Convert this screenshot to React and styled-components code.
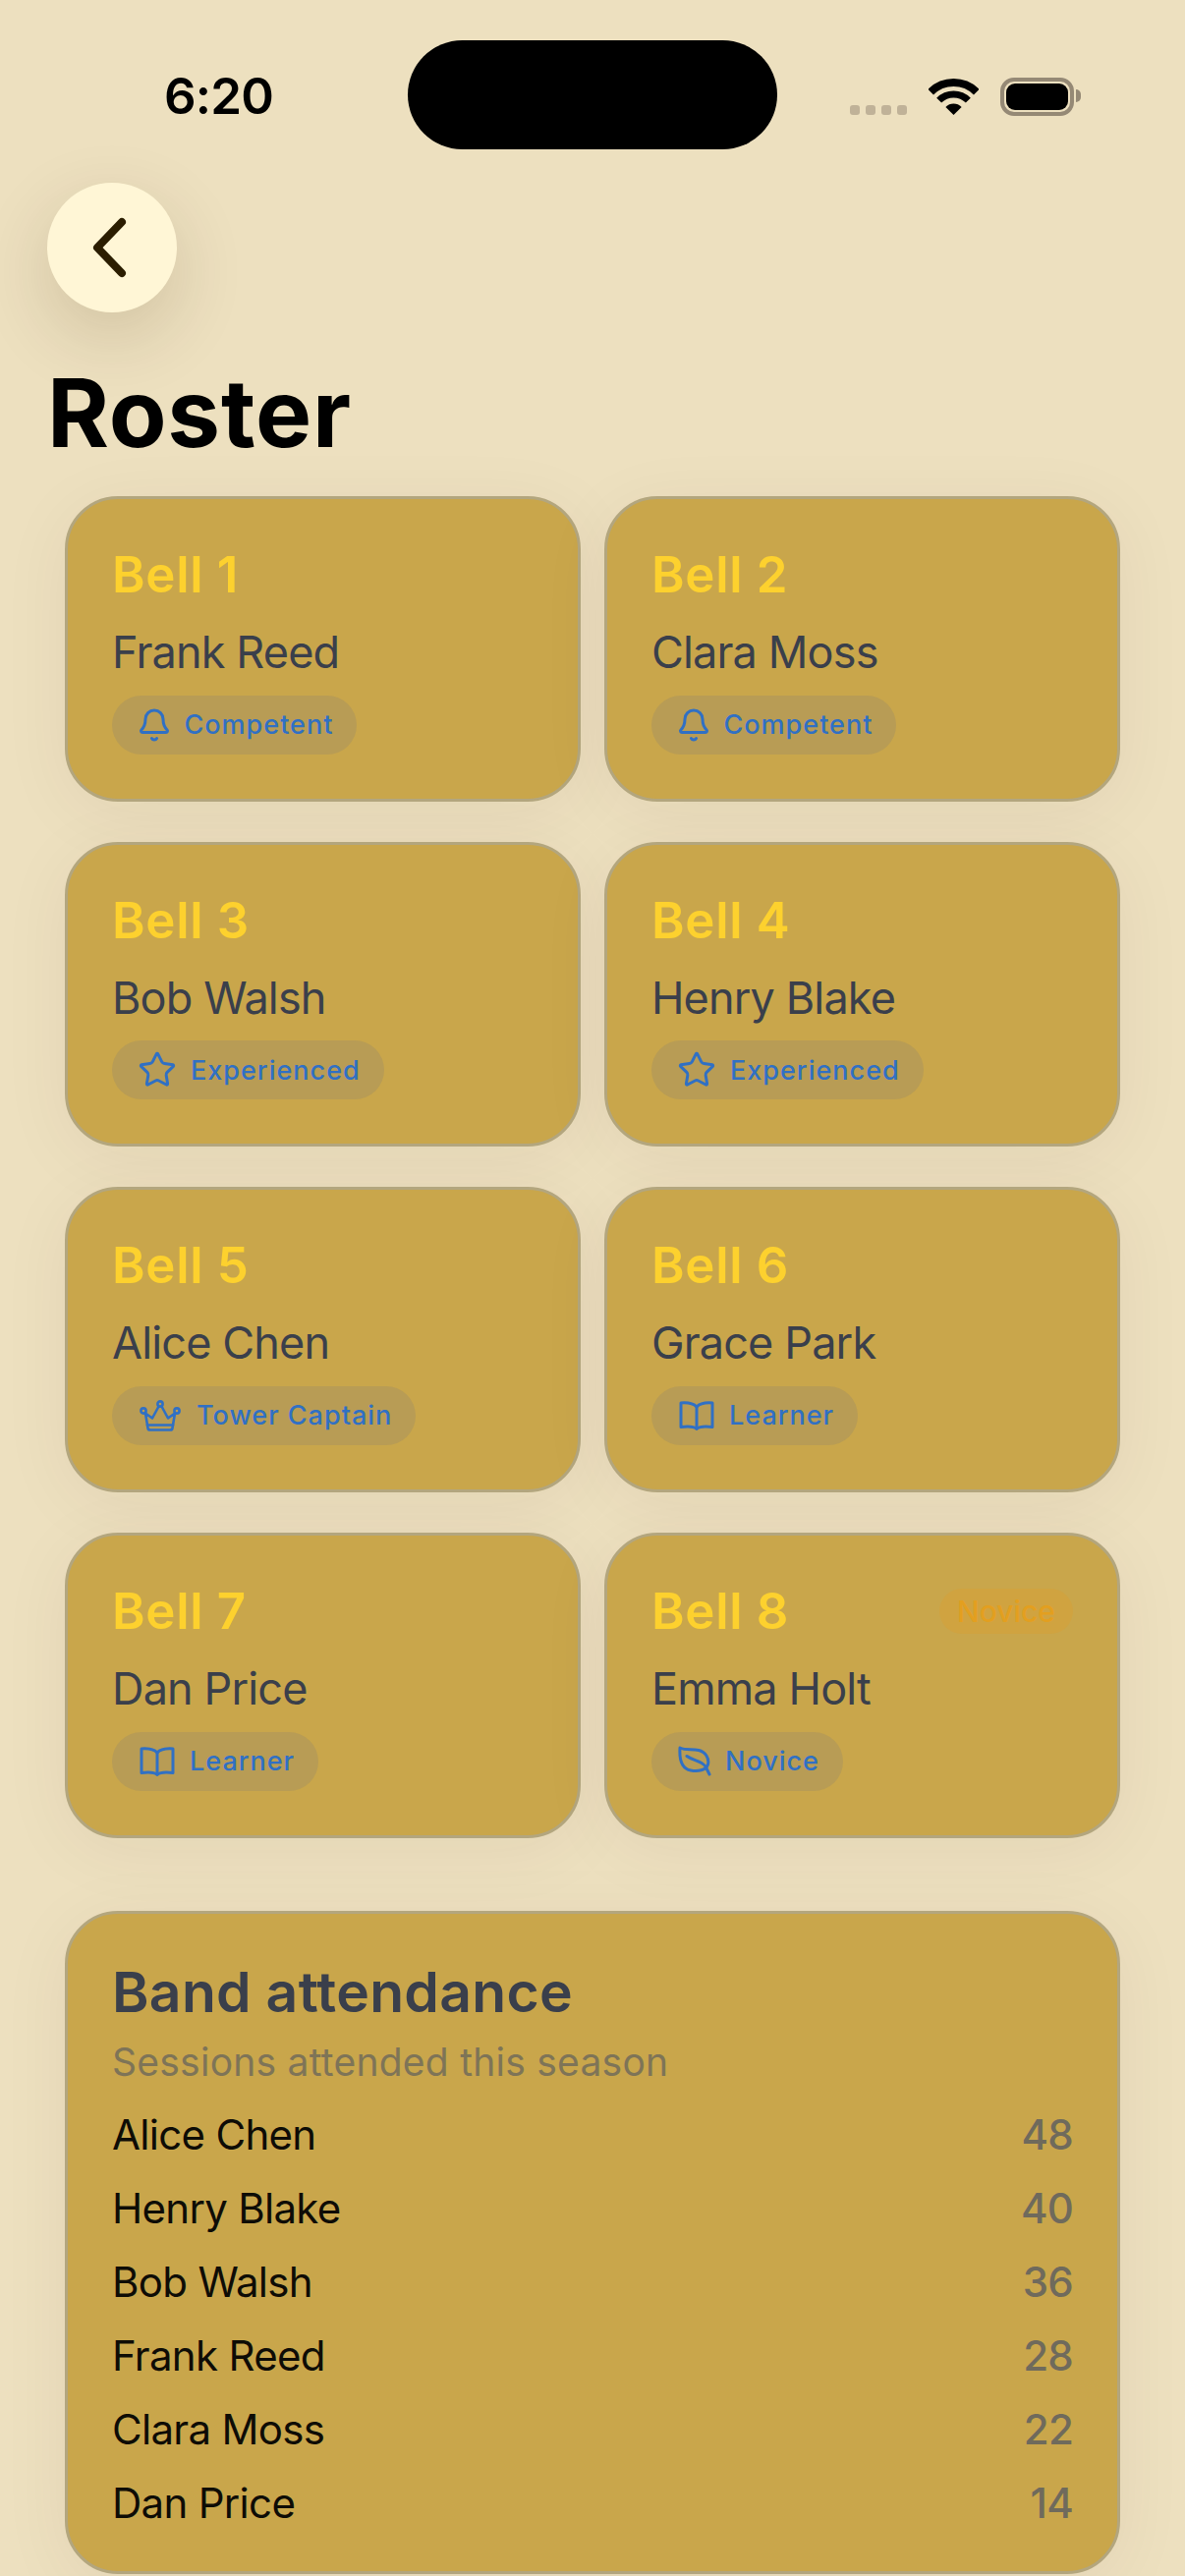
import React from "react"
import styled, { createGlobalStyle } from "styled-components"
import { Bell, Star } from "lucide-react"

const Global = createGlobalStyle`
  html, body {
    margin: 0;
    padding: 0;
    background: #ede0bf;
  }
  * { box-sizing: border-box; }
`

const Screen = styled.div`
  width: 1206px;
  height: 2622px;
  background: #ede0bf;
  font-family: Inter, "Noto Sans", sans-serif;
  overflow: hidden;
`

const StatusBar = styled.div`
  display: flex;
  align-items: center;
  height: 152px;
  padding: 41px 0 0 167px;
`

const Clock = styled.div`
  width: 248px;
  font-size: 51px;
  font-weight: 600;
  line-height: 60px;
  letter-spacing: -0.8px;
  color: #000;
  padding-top: 3px;
`

const Island = styled.div`
  width: 376px;
  height: 111px;
  border-radius: 56px;
  background: #000;
`

const StatusIcons = styled.div`
  display: flex;
  align-items: flex-end;
  margin-left: 74px;
  height: 39px;
  margin-top: 4px;
`

const Dots = styled.div`
  display: flex;
  gap: 6px;
  margin-bottom: 1px;
`

const Dot = styled.span`
  width: 10px;
  height: 10px;
  border-radius: 3px;
  background: #c0b298;
`

const Wifi = styled.svg`
  width: 51px;
  height: 37px;
  margin-left: 22px;
  margin-bottom: 1px;
`

const Battery = styled.div`
  width: 75px;
  height: 39px;
  margin-left: 22px;
  border: 4px solid #958975;
  border-radius: 14px;
  padding: 2px;
  position: relative;

  &::before {
    content: "";
    display: block;
    height: 100%;
    background: #000;
    border-radius: 9px;
  }

  &::after {
    content: "";
    position: absolute;
    right: -11px;
    top: 8px;
    width: 5px;
    height: 13px;
    border-radius: 0 5px 5px 0;
    background: #958975;
  }
`

const BackButton = styled.button`
  display: flex;
  align-items: center;
  justify-content: center;
  width: 132px;
  height: 132px;
  margin: 34px 0 0 48px;
  padding: 0;
  border: 0;
  border-radius: 50%;
  background: #fff6d6;
  box-shadow: 0 24px 72px rgba(60, 40, 0, 0.16);
`

const Chevron = styled.svg`
  width: 48px;
  height: 64px;
  margin-left: -9px;
`

const Title = styled.h1`
  margin: 44px 0 27px 48px;
  font-size: 96px;
  line-height: 116px;
  font-weight: 700;
  letter-spacing: 0.8px;
  color: #000;
`

const Grid = styled.div`
  display: grid;
  grid-template-columns: 525px 525px;
  column-gap: 24px;
  row-gap: 41.2px;
  padding: 0 66px;
`

const Card = styled.div`
  padding: 45px;
  border: 3px solid #b3a67e;
  border-radius: 54px;
  background: #c9a64b;
  box-shadow: 0 12px 72px rgba(60, 40, 0, 0.06);
`

const CardTop = styled.div`
  display: flex;
  align-items: center;
  justify-content: space-between;
`

const BellName = styled.div`
  font-size: 51px;
  line-height: 64px;
  font-weight: 600;
  letter-spacing: 0.7px;
  color: #fdd12e;
`

const NoviceTag = styled.span`
  padding: 0 18px;
  font-size: 30px;
  line-height: 46px;
  font-weight: 500;
  color: #e39f1f;
  background: #d0a340;
  border-radius: 23px;
`

const Ringer = styled.div`
  margin-top: 20px;
  font-size: 45px;
  line-height: 54px;
  letter-spacing: -0.85px;
  color: #3a3f4b;
`

const Skill = styled.div`
  display: flex;
  width: fit-content;
  align-items: center;
  gap: 12px;
  height: 60px;
  margin-top: 16.5px;
  padding: 0 24px;
  border-radius: 30px;
  background: #b89c55;
  color: #3070c4;
  font-size: 27px;
  font-weight: 500;
  letter-spacing: 1px;
`

const IconBox = styled.span`
  display: flex;
  align-items: center;
  justify-content: center;
  width: ${(p) => p.$w}px;
  height: 36px;
`

const Panel = styled.div`
  margin: 74.5px 66px 0;
  padding: 45px 45px 44px;
  border: 3px solid #b3a67e;
  border-radius: 54px;
  background: #c9a64b;
  box-shadow: 0 12px 72px rgba(60, 40, 0, 0.06);
`

const PanelTitle = styled.h2`
  margin: 0;
  font-size: 57px;
  line-height: 69px;
  font-weight: 600;
  letter-spacing: 0.3px;
  color: #3a3f4b;
`

const PanelSub = styled.div`
  margin: 13px 0 25px;
  font-size: 39px;
  line-height: 47px;
  letter-spacing: 0.25px;
  color: #7e7457;
`

const Rows = styled.div`
  display: flex;
  flex-direction: column;
  gap: 24px;
`

const Row = styled.div`
  display: flex;
  justify-content: space-between;
  font-size: 42px;
  line-height: 51px;
  letter-spacing: -0.7px;
  color: #0e0c06;
`

const Count = styled.span`
  color: #6f6a5c;
  font-weight: 500;
  letter-spacing: -0.8px;
`

const CrownIcon = () => (
  <svg width="42" height="32" viewBox="0 0 42 32" fill="none" stroke="currentColor" strokeWidth="2.6" strokeLinejoin="round" strokeLinecap="round">
    <circle cx="21" cy="4" r="2.6" />
    <circle cx="4" cy="11" r="2.6" />
    <circle cx="38" cy="11" r="2.6" />
    <path d="M6 13.5 L13 18.5 L19.5 6.5 M22.5 6.5 L29 18.5 L36 13.5 L33.5 28.5 Q33.3 30.5 31 30.5 H11 Q8.7 30.5 8.5 28.5 L6 13.5" />
    <path d="M8 25.5 H34" />
  </svg>
)

const BookIcon = () => (
  <svg width="36" height="30" viewBox="0 0 36 30" fill="none" stroke="currentColor" strokeWidth="3" strokeLinejoin="round" strokeLinecap="round">
    <path d="M18 6 C15 2.8 9.5 1.4 2 2 V26.6 C9.5 25.6 15 26 18 28.4 C21 26 26.5 25.6 34 26.6 V2 C26.5 1.4 21 2.8 18 6 Z" />
    <path d="M18 6 V28" />
  </svg>
)

const LeafIcon = () => (
  <svg width="34" height="32" viewBox="0 0 34 32" fill="none" stroke="currentColor" strokeWidth="3" strokeLinejoin="round" strokeLinecap="round">
    <path d="M2 2 C8 5 14 3 21 4.5 C28 6 32 13 30.5 19 C28.5 25 20 26.5 13 25 C5 23.5 1 17 2 2 Z" />
    <path d="M9 10.5 C15 15 24 15 28 21 L32 29" />
  </svg>
)

const icons = {
  Competent: { w: 37.5, el: <Bell size={36} strokeWidth={2} /> },
  Experienced: { w: 44, el: <Star size={40} strokeWidth={1.8} /> },
  "Tower Captain": { w: 50, el: <CrownIcon /> },
  Learner: { w: 43, el: <BookIcon /> },
  Novice: { w: 39, el: <LeafIcon /> },
}

const bells = [
  { n: 1, name: "Frank Reed", skill: "Competent" },
  { n: 2, name: "Clara Moss", skill: "Competent" },
  { n: 3, name: "Bob Walsh", skill: "Experienced" },
  { n: 4, name: "Henry Blake", skill: "Experienced" },
  { n: 5, name: "Alice Chen", skill: "Tower Captain" },
  { n: 6, name: "Grace Park", skill: "Learner" },
  { n: 7, name: "Dan Price", skill: "Learner" },
  { n: 8, name: "Emma Holt", skill: "Novice", tag: true },
]

const attendance = [
  ["Alice Chen", 48],
  ["Henry Blake", 40],
  ["Bob Walsh", 36],
  ["Frank Reed", 28],
  ["Clara Moss", 22],
  ["Dan Price", 14],
]

export default function App() {
  return (
    <Screen>
      <Global />
      <StatusBar>
        <Clock>6:20</Clock>
        <Island />
        <StatusIcons>
          <Dots>
            <Dot />
            <Dot />
            <Dot />
            <Dot />
          </Dots>
          <Wifi viewBox="0 0 51 37" fill="none">
            <path d="M2.2 13.7 A33 33 0 0 1 48.8 13.7" stroke="#000" strokeWidth="8" />
            <path d="M10.65 22.15 A21 21 0 0 1 40.35 22.15" stroke="#000" strokeWidth="7" />
            <path d="M25.5 37 L17.4 28.9 A11.5 11.5 0 0 1 33.6 28.9 Z" fill="#000" />
          </Wifi>
          <Battery />
        </StatusIcons>
      </StatusBar>

      <BackButton aria-label="Back">
        <Chevron viewBox="0 0 48 64" fill="none">
          <path d="M38 6 L13 32 L38 58" stroke="#2b1d00" strokeWidth="8" strokeLinecap="round" strokeLinejoin="round" />
        </Chevron>
      </BackButton>

      <Title>Roster</Title>

      <Grid>
        {bells.map((b) => (
          <Card key={b.n}>
            <CardTop>
              <BellName>Bell {b.n}</BellName>
              {b.tag && <NoviceTag>Novice</NoviceTag>}
            </CardTop>
            <Ringer>{b.name}</Ringer>
            <Skill>
              <IconBox $w={icons[b.skill].w}>{icons[b.skill].el}</IconBox>
              {b.skill}
            </Skill>
          </Card>
        ))}
      </Grid>

      <Panel>
        <PanelTitle>Band attendance</PanelTitle>
        <PanelSub>Sessions attended this season</PanelSub>
        <Rows>
          {attendance.map(([name, count]) => (
            <Row key={name}>
              <span>{name}</span>
              <Count>{count}</Count>
            </Row>
          ))}
        </Rows>
      </Panel>
    </Screen>
  )
}
